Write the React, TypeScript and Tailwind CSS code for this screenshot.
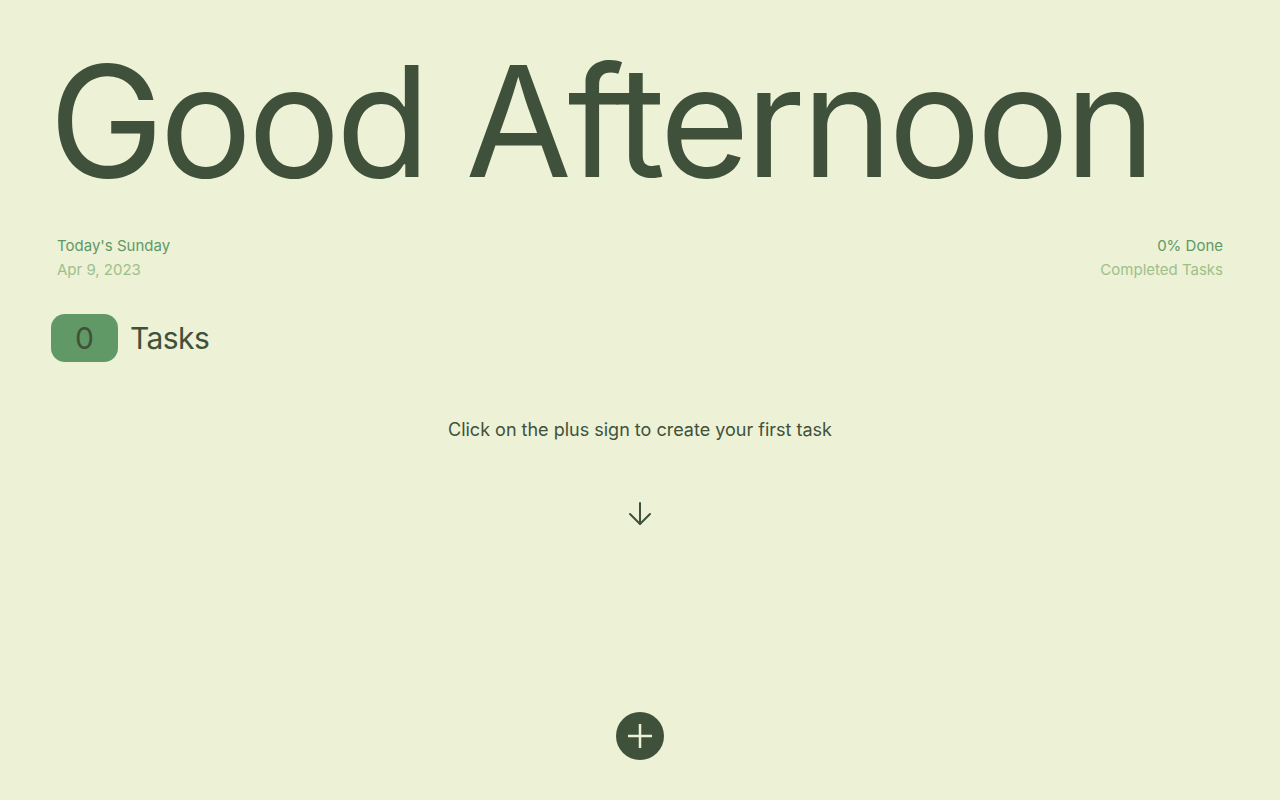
import React from "react";

export default function App() {
  return (
    <div
      className="min-h-[800px] w-full bg-[#EDF1D6] text-[#40513B] flex flex-col px-[50px]"
      style={{ fontFamily: "Inter, 'Noto Sans', sans-serif" }}
    >
      <h1 className="text-[154px] leading-none font-normal tracking-[-0.027em] mt-[44px] -ml-[1px] whitespace-nowrap">
        Good Afternoon
      </h1>
      <div className="flex justify-between px-[7px] mt-[36px] text-[15px] leading-[24px]">
        <div className="flex flex-col">
          <span className="text-[#609966]">Today's Sunday</span>
          <span className="text-[#9DC08B]">Apr 9, 2023</span>
        </div>
        <div className="flex flex-col items-end">
          <span className="text-[#609966]">0% Done</span>
          <span className="text-[#9DC08B]">Completed Tasks</span>
        </div>
      </div>
      <div className="flex items-center gap-[12px] mt-[32px] ml-[1px]">
        <div className="w-[67px] h-[48px] rounded-[14px] bg-[#609966] flex items-center justify-center text-[30px] text-[#40513B]">
          0
        </div>
        <span className="text-[30px] tracking-[-0.02em] text-[#40513B]">Tasks</span>
      </div>
      <p className="text-center text-[18px] leading-[27px] mt-[54px]">
        Click on the plus sign to create your first task
      </p>
      <div className="flex justify-center mt-[59px]">
        <svg width="24" height="24" viewBox="0 0 24 24" fill="none" stroke="#40513B" strokeWidth="2" strokeLinecap="round" strokeLinejoin="round">
          <path d="M12 1v21" />
          <path d="M2 12l10 10 10-10" />
        </svg>
      </div>
      <div className="flex justify-center mt-[186px]">
        <button className="w-[48px] h-[48px] rounded-full bg-[#40513B] flex items-center justify-center">
          <svg width="24" height="24" viewBox="0 0 24 24" fill="none" stroke="#EDF1D6" strokeWidth="2.5" strokeLinecap="butt">
            <path d="M12 0v24" />
            <path d="M0 12h24" />
          </svg>
        </button>
      </div>
    </div>
  );
}
